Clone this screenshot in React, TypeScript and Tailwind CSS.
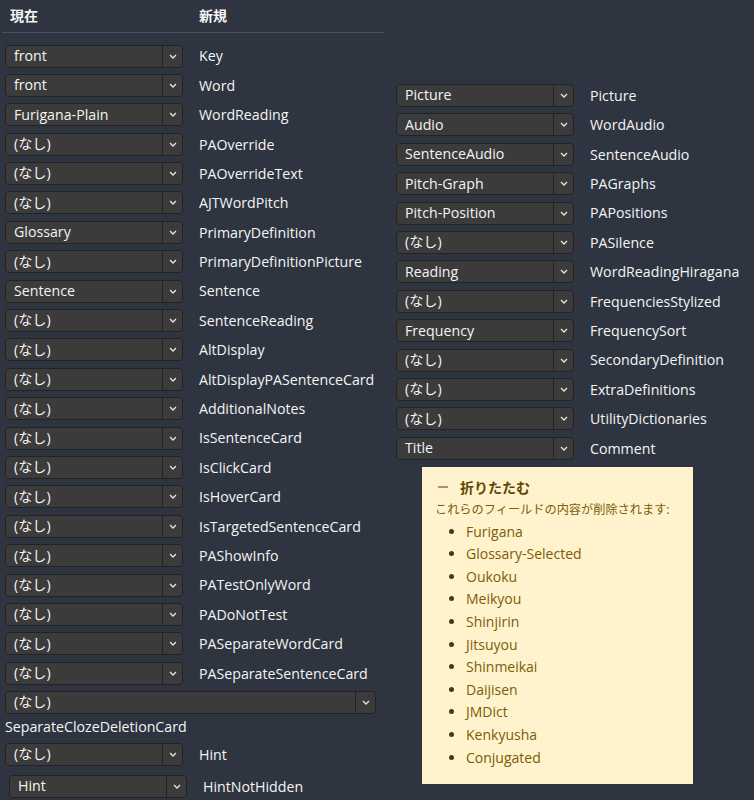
import React from "react";

const leftRows: [string, string][] = [
  ["front", "Key"],
  ["front", "Word"],
  ["Furigana-Plain", "WordReading"],
  ["(なし)", "PAOverride"],
  ["(なし)", "PAOverrideText"],
  ["(なし)", "AJTWordPitch"],
  ["Glossary", "PrimaryDefinition"],
  ["(なし)", "PrimaryDefinitionPicture"],
  ["Sentence", "Sentence"],
  ["(なし)", "SentenceReading"],
  ["(なし)", "AltDisplay"],
  ["(なし)", "AltDisplayPASentenceCard"],
  ["(なし)", "AdditionalNotes"],
  ["(なし)", "IsSentenceCard"],
  ["(なし)", "IsClickCard"],
  ["(なし)", "IsHoverCard"],
  ["(なし)", "IsTargetedSentenceCard"],
  ["(なし)", "PAShowInfo"],
  ["(なし)", "PATestOnlyWord"],
  ["(なし)", "PADoNotTest"],
  ["(なし)", "PASeparateWordCard"],
  ["(なし)", "PASeparateSentenceCard"],
];

const rightRows: [string, string][] = [
  ["Picture", "Picture"],
  ["Audio", "WordAudio"],
  ["SentenceAudio", "SentenceAudio"],
  ["Pitch-Graph", "PAGraphs"],
  ["Pitch-Position", "PAPositions"],
  ["(なし)", "PASilence"],
  ["Reading", "WordReadingHiragana"],
  ["(なし)", "FrequenciesStylized"],
  ["Frequency", "FrequencySort"],
  ["(なし)", "SecondaryDefinition"],
  ["(なし)", "ExtraDefinitions"],
  ["(なし)", "UtilityDictionaries"],
  ["Title", "Comment"],
];

const removed = [
  "Furigana",
  "Glossary-Selected",
  "Oukoku",
  "Meikyou",
  "Shinjirin",
  "Jitsuyou",
  "Shinmeikai",
  "Daijisen",
  "JMDict",
  "Kenkyusha",
  "Conjugated",
];

// fake <select> with the divider + chevron on the right
const Select = ({ value, wide = false }: { value: string; wide?: boolean }) => (
  <div
    className={`flex h-[23px] shrink-0 items-stretch rounded-[4px] border border-[#232323] bg-[#3b3b3b] text-[#f4f4f4] ${
      wide ? "w-[371px]" : "w-[178px]"
    }`}
  >
    <div className="flex flex-1 items-center pl-[8px] leading-none">{value}</div>
    <div className="flex w-[20px] items-center justify-center border-l border-[#232323]">
      <svg width="8" height="5" viewBox="0 0 8 5" fill="none">
        <path d="M1 1l3 3 3-3" stroke="#e6e6e6" strokeWidth="1.3" />
      </svg>
    </div>
  </div>
);

const Row = ({ value, label }: { value: string; label: string }) => (
  <div className="flex h-[23px] items-center">
    <Select value={value} />
    <span className="ml-[16px] whitespace-nowrap text-[#f4f4f4]">{label}</span>
  </div>
);

export default function App() {
  return (
    <div
      className="flex h-[800px] w-[754px] overflow-hidden bg-[#2e3440] text-[14.2px]"
      style={{ fontFamily: '"Open Sans", "Noto Sans CJK JP", sans-serif' }}
    >
      {/* left column */}
      <div className="w-[384px] shrink-0 pl-[2px]">
        <div className="flex h-[33px] items-center border-b border-[#4a4f5b] pb-[1px] text-[14px] font-bold text-[#f4f4f4]">
          <span className="ml-[8px] w-[189px]">現在</span>
          <span>新規</span>
        </div>
        <div className="flex flex-col gap-y-[6.4px] pl-[3px] pt-[11.5px]">
          {leftRows.map(([v, l]) => (
            <Row key={l} value={v} label={l} />
          ))}
          <Select value="(なし)" wide />
          <div className="-mb-[1px] -mt-[4px] h-[21px] leading-[21px] text-[#f4f4f4]">SeparateClozeDeletionCard</div>
          <Row value="(なし)" label="Hint" />
          <div className="ml-[4px] mt-[2.6px]">
            <Row value="Hint" label="HintNotHidden" />
          </div>
        </div>
      </div>

      {/* right column */}
      <div className="pl-[12px] pt-[84px]">
        <div className="flex flex-col gap-y-[6.4px]">
          {rightRows.map(([v, l]) => (
            <Row key={l} value={v} label={l} />
          ))}
        </div>
        <div className="ml-[26px] mt-[7px] h-[317px] w-[271px] bg-[#fff3cd] px-[13px] pt-[10px] text-[14px] text-[#7d5c06]">
          <div className="flex items-center font-bold text-[#5f4605]">
            <span className="ml-[3px] mr-[12px] h-[1.5px] w-[10px] bg-[#b0925a]" />
            折りたたむ
          </div>
          <div className="mt-[1px] whitespace-nowrap text-[12.2px] leading-[22px]">
            これらのフィールドの内容が削除されます:
          </div>
          <ul className="list-disc pl-[31px] leading-[22.6px] marker:text-[#4f3a05]">
            {removed.map((r) => (
              <li key={r}>{r}</li>
            ))}
          </ul>
        </div>
      </div>
    </div>
  );
}
